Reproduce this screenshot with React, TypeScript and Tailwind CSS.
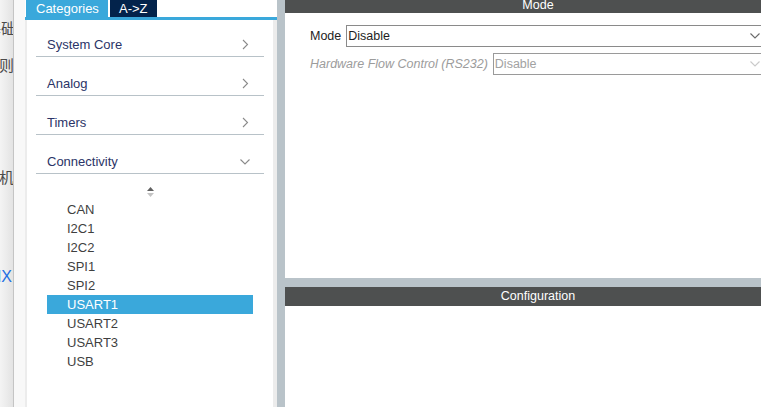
import React from "react";

const categories = ["System Core", "Analog", "Timers", "Connectivity"];
const peripherals = ["CAN", "I2C1", "I2C2", "SPI1", "SPI2", "USART1", "USART2", "USART3", "USB"];

function ChevronRight() {
  return (
    <svg width="7" height="11" viewBox="0 0 7 11" className="mr-[15px]">
      <path d="M1 1l4.5 4.5L1 10" stroke="#8a8a8a" strokeWidth="1.1" fill="none" />
    </svg>
  );
}

function ChevronDown({ color = "#8a8a8a" }: { color?: string }) {
  return (
    <svg width="10" height="6" viewBox="0 0 10 6">
      <path d="M0.5 0.5L5 5l4.5-4.5" stroke={color} strokeWidth="1.1" fill="none" />
    </svg>
  );
}

function SideStrip() {
  return (
    <div className="w-[14px] shrink-0 overflow-hidden border-r border-[#c4c4c4] bg-gradient-to-r from-[#f4f4f4] to-[#e3e3e3] text-[15px] text-[#4a4a4a]">
      <div className="flex flex-col items-end">
        <div className="mt-[19px] h-[20px] leading-[20px] whitespace-nowrap -mr-[3px]">基础</div>
        <div className="mt-[17px] h-[20px] leading-[20px] whitespace-nowrap -mr-[1px]">规则</div>
        <div className="mt-[92px] h-[20px] leading-[20px] whitespace-nowrap -mr-[1px]">单片机</div>
        <div className="mt-[79px] h-[20px] leading-[20px] whitespace-nowrap text-[16px] text-[#1f6fe3] mr-[1px]">CubeMX</div>
      </div>
    </div>
  );
}

function LeftPanel() {
  return (
    <div className="w-[252px] shrink-0 flex flex-col">
      <div className="h-[17px] flex gap-[2px] pl-px bg-white text-[13px] text-white">
        <div className="w-[82px] bg-[#3aa8db] pl-[10px] leading-[17px]">Categories</div>
        <div className="w-[47px] bg-[#03234b] pl-[9px] leading-[17px]">A-&gt;Z</div>
      </div>
      <div className="h-[3px] bg-[#3aa8db]" />
      <div className="flex-1 bg-white border-l-2 border-r-4 border-[#ececec]">
        {categories.map((c, i) => (
          <div
            key={c}
            className={`${i === 0 ? "h-[37px]" : "h-[39px]"} mx-[9px] border-b border-[#b8c2c8] flex items-end pb-[4px]`}
          >
            <div className="h-[15px] w-full flex items-center justify-between">
              <span className="pl-[11px] text-[13px] leading-[15px] text-[#2b3467]">{c}</span>
              {i === 3 ? (
                <span className="mr-[14px] flex">
                  <ChevronDown />
                </span>
              ) : (
                <ChevronRight />
              )}
            </div>
          </div>
        ))}
        <div className="h-[26px] flex items-end justify-center pb-[3px]">
          <svg width="7" height="10" viewBox="0 0 7 10">
            <path d="M3.5 0L7 4H0z" fill="#616161" />
            <path d="M0 6h7L3.5 10z" fill="#c4c4c4" />
          </svg>
        </div>
        <div className="mx-[20px] flex flex-col">
          {peripherals.map((p) => (
            <div
              key={p}
              className={`h-[19px] leading-[19px] pl-[20px] text-[13px] ${
                p === "USART1" ? "bg-[#3aa8db] text-white" : "text-[#3f3f3f]"
              }`}
            >
              {p}
            </div>
          ))}
        </div>
      </div>
    </div>
  );
}

function RightPanel() {
  return (
    <div className="w-[506px] shrink-0 flex flex-col text-[12.5px]">
      <div className="h-[278px] bg-white flex flex-col">
        <div className="h-[13px] bg-[#4e5050] text-white text-center leading-[11px] overflow-hidden">Mode</div>
        <div className="pl-[25px] pr-[25px] pt-[12px] flex flex-col gap-[6px]">
          <div className="flex items-center gap-[5px]">
            <span className="text-[#222]">Mode</span>
            <div className="flex-1 h-[22px] border border-[#8a8a8a] flex items-center justify-between pl-px pr-[5px]">
              <span className="text-[#1e1e1e]">Disable</span>
              <ChevronDown color="#6a6a6a" />
            </div>
          </div>
          <div className="flex items-center gap-[5px]">
            <span className="italic text-[#9c9c9c]">Hardware Flow Control (RS232)</span>
            <div className="flex-1 h-[22px] border border-[#9a9a9a] flex items-center justify-between pl-px pr-[5px]">
              <span className="text-[#a2a2a2]">Disable</span>
              <ChevronDown color="#cacaca" />
            </div>
          </div>
        </div>
      </div>
      <div className="h-[9px] bg-[#b9c3c9]" />
      <div className="flex-1 bg-white flex flex-col">
        <div className="h-[19px] bg-[#4e5050] text-white text-center leading-[19px]">Configuration</div>
      </div>
    </div>
  );
}

export default function App() {
  return (
    <div className="w-[761px] h-[407px] overflow-hidden flex bg-white font-['Liberation_Sans','Noto_Sans_CJK_SC',sans-serif]">
      <SideStrip />
      <div className="w-[11px] shrink-0 bg-[#f8f8f8]" />
      <LeftPanel />
      <div className="w-[8px] shrink-0 bg-[#b9c3c9]" />
      <RightPanel />
    </div>
  );
}
